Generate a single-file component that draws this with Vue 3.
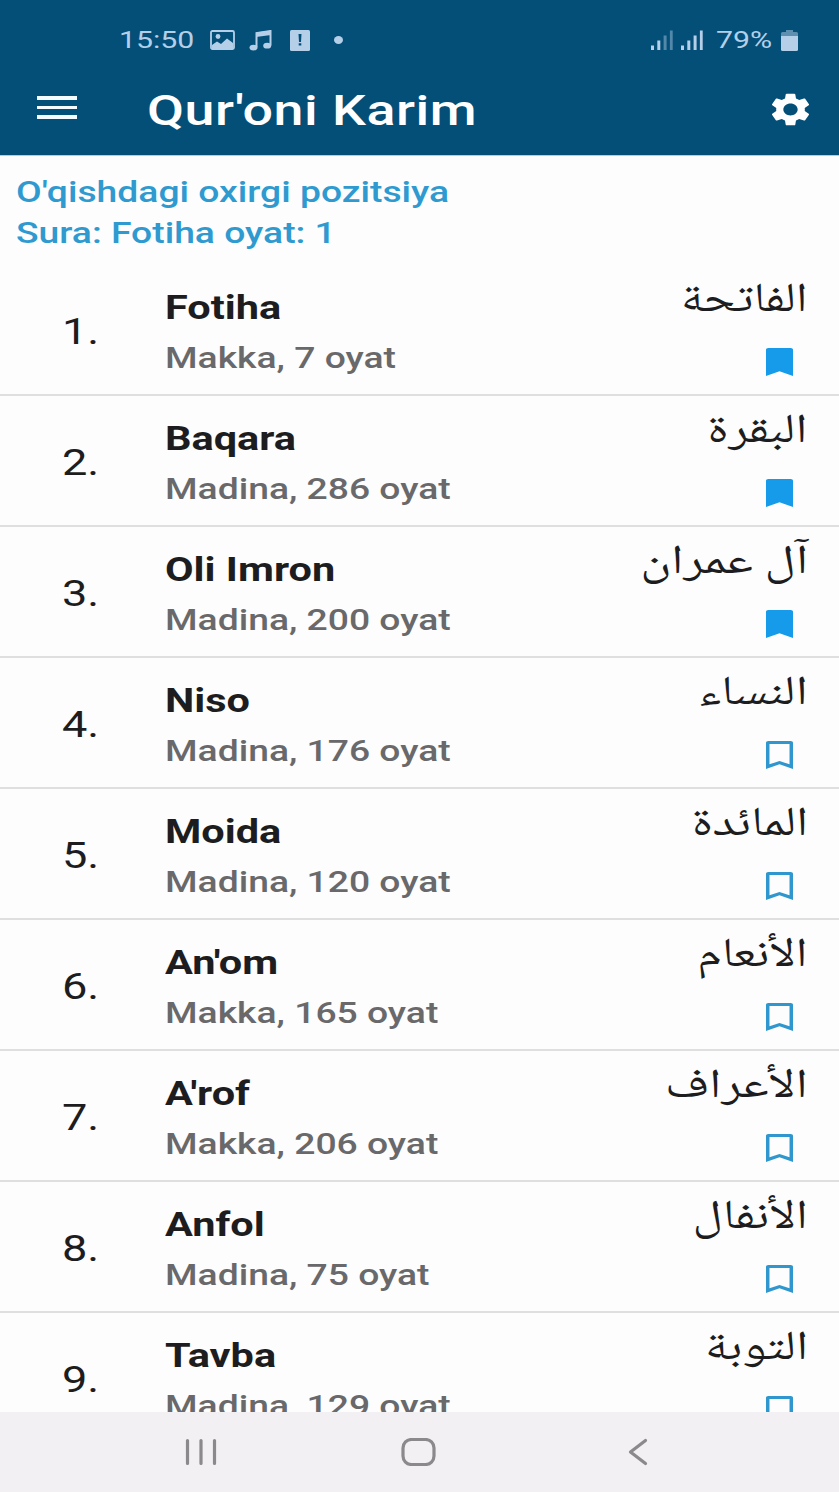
<script setup>
const suras = [
  { name: 'Fotiha', info: 'Makka, 7 oyat', arabic: 'الفاتحة', stretch: 1.21, saved: true },
  { name: 'Baqara', info: 'Madina, 286 oyat', arabic: 'البقرة', stretch: 1.26, saved: true },
  { name: 'Oli Imron', info: 'Madina, 200 oyat', arabic: 'آل عمران', stretch: 1.28, saved: true },
  { name: 'Niso', info: 'Madina, 176 oyat', arabic: 'النساء', stretch: 1.28, saved: false },
  { name: 'Moida', info: 'Madina, 120 oyat', arabic: 'المائدة', stretch: 1.25, saved: false },
  { name: "An'om", info: 'Makka, 165 oyat', arabic: 'الأنعام', stretch: 1.235, saved: false },
  { name: "A'rof", info: 'Makka, 206 oyat', arabic: 'الأعراف', stretch: 1.265, saved: false },
  { name: 'Anfol', info: 'Madina, 75 oyat', arabic: 'الأنفال', stretch: 1.243, saved: false },
  { name: 'Tavba', info: 'Madina, 129 oyat', arabic: 'التوبة', stretch: 1.254, saved: false }
]
</script>

<template>
  <div class="screen">
    <header class="top">
      <div class="status">
        <span class="wide clock">15:50</span>
        <svg class="s-img" viewBox="0 0 25 20" width="25" height="20">
          <rect x="1" y="1" width="23" height="18" rx="1.5" fill="none" stroke="currentColor" stroke-width="1.8" />
          <circle cx="8" cy="6.5" r="2.4" fill="currentColor" />
          <path d="M2 15 L7 11.5 L11 14 L17 8.5 L23 13 V19 H2Z" fill="currentColor" />
        </svg>
        <svg class="s-note" viewBox="0 0 23 21" width="23" height="21">
          <path d="M7.500 17 V3 L21.500 1 V15.500" fill="none" stroke="currentColor" stroke-width="2" />
          <path d="M7 2.500 L22 .5 V5 L7 7Z" fill="currentColor" />
          <ellipse cx="4.500" cy="17.600" rx="4" ry="2.900" fill="currentColor" />
          <ellipse cx="18.200" cy="15.700" rx="4" ry="2.900" fill="currentColor" />
        </svg>
        <svg class="s-alert" viewBox="0 0 20 21" width="20" height="21">
          <rect width="20" height="21" rx="1.5" fill="currentColor" />
          <path d="M8.500 4 H11.500 L11 12 H9Z M8.700 13.200 H11.300 V15.600 H8.700Z" fill="#044f78" />
        </svg>
        <i class="dot"></i>
        <span class="grow"></span>
        <svg class="s-sig" viewBox="0 0 22 20" width="22" height="20" fill="currentColor">
          <path d="M0 15.500h3V20H0zM6.300 10.500h3V20h-3z" />
          <path opacity=".45" d="M12.600 5.500h3V20h-3zM18.900 .5h2.800V20h-2.800z" />
        </svg>
        <svg class="s-sig2" viewBox="0 0 22 20" width="22" height="20" fill="currentColor">
          <path d="M0 15.500h3V20H0zM6.300 10.500h3V20h-3zM12.600 5.500h3V20h-3zM18.900 .5h2.800V20h-2.800z" />
        </svg>
        <span class="wide percent">79%</span>
        <svg class="s-bat" viewBox="0 0 17 21" width="17" height="21" fill="currentColor">
          <path opacity=".5" d="M5 0h7v2h3.500Q17 2 17 3.500V6H0V3.500Q0 2 1.500 2H5z" />
          <path d="M0 6h17v13.500Q17 21 15.500 21h-14Q0 21 0 19.500z" />
        </svg>
      </div>
      <div class="bar">
        <div class="menu"><i></i><i></i><i></i></div>
        <h1 class="wide title">Qur'oni Karim</h1>
        <svg class="gear" viewBox="2.2 2 19.6 20" preserveAspectRatio="none" width="39" height="33">
          <path fill="#fff" d="M19.140 12.940c.04-.3.060-.610.060-.940 0-.320-.020-.640-.070-.940l2.030-1.580c.18-.14.230-.410.120-.610l-1.920-3.320c-.12-.22-.37-.29-.59-.22l-2.390.960c-.5-.380-1.030-.7-1.620-.940l-.360-2.540c-.04-.24-.24-.41-.48-.41h-3.840c-.24 0-.43.170-.47.410l-.360 2.540c-.59.240-1.130.570-1.620.940l-2.390-.960c-.22-.08-.47 0-.59.220L2.740 8.870c-.12.210-.08.470.120.610l2.030 1.580c-.05.300-.09.630-.09.940s.020.640.070.940l-2.030 1.580c-.18.140-.23.410-.12.610l1.920 3.320c.12.220.37.290.59.220l2.390-.960c.5.380 1.030.7 1.620.940l.360 2.540c.05.240.24.410.48.410h3.840c.24 0 .44-.17.470-.41l.360-2.540c.59-.24 1.130-.560 1.620-.940l2.390.960c.22.080.47 0 .59-.22l1.920-3.320c.12-.22.070-.47-.12-.61l-2.010-1.580zM12 15.600c-1.980 0-3.600-1.620-3.600-3.600s1.620-3.600 3.600-3.600 3.600 1.620 3.600 3.600-1.620 3.600-3.600 3.600z" />
        </svg>
      </div>
    </header>

    <section class="last">
      <div><span class="wide">O'qishdagi oxirgi pozitsiya</span></div>
      <div><span class="wide">Sura: Fotiha oyat: 1</span></div>
    </section>

    <main class="list">
      <article v-for="(sura, i) in suras" :key="sura.name" class="row">
        <div class="num"><span class="wide">{{ i + 1 }}.</span></div>
        <div class="body">
          <div class="name"><span class="wide">{{ sura.name }}</span></div>
          <div class="info"><span class="wide">{{ sura.info }}</span></div>
        </div>
        <div class="side">
          <span class="arabic" lang="ar" dir="rtl" :style="{ transform: `scaleX(${sura.stretch})` }">{{ sura.arabic }}</span>
          <svg class="mark" viewBox="5 3 14 18" preserveAspectRatio="none" width="27" height="28">
            <path v-if="sura.saved" fill="#159bea" d="M17.800 3H6.200c-.7 0-1.200.5-1.200 1.200V21l7-3 7 3V4.200c0-.7-.5-1.200-1.200-1.200z" />
            <path v-else fill="#2f97cd" d="M17.800 3H6.200c-.7 0-1.200.5-1.200 1.200V21l7-3 7 3V4.200c0-.7-.5-1.200-1.200-1.200zM17.200 18l-5.200-2.180L6.800 18V5h10.400v13z" />
          </svg>
        </div>
      </article>
    </main>

    <nav class="nav">
      <svg viewBox="0 0 32 28" width="32" height="28"><path d="M2.500 2.500v23M16 2.500v23M29.500 2.500v23" stroke="#8b898c" stroke-width="3.2" stroke-linecap="round" /></svg>
      <svg viewBox="0 0 36 28" width="36" height="28"><rect x="2" y="1.500" width="31" height="25" rx="8.500" fill="none" stroke="#8b898c" stroke-width="3.2" /></svg>
      <svg viewBox="0 0 20 28" width="20" height="28"><path d="M17.500 2.500 L2.500 14 L17.500 25.500" fill="none" stroke="#8b898c" stroke-width="3.2" stroke-linecap="round" stroke-linejoin="round" /></svg>
    </nav>
  </div>
</template>

<style>
body { margin: 0; }
</style>

<style scoped>
.screen {
  width: 839px;
  height: 1492px;
  display: flex;
  flex-direction: column;
  overflow: hidden;
  background: #fdfdfd;
  font-family: Roboto, "Liberation Sans", sans-serif;
}
.wide { display: inline-block; white-space: nowrap; transform: scaleX(1.22); transform-origin: 0 50%; }
.top { height: 155px; flex: none; background: #044f78; border-bottom: 1px solid #a9cfea; }
.status { height: 80px; box-sizing: border-box; padding: 0 41px 0 119px; display: flex; align-items: center; color: #b5cfe8; font-size: 24px; }
.status .wide { transform: scaleX(1.26); }
.clock { width: 91px; }
.s-note { margin-left: 14px; }
.s-alert { margin-left: 18px; }
.dot { width: 9px; height: 8px; border-radius: 50%; background: currentColor; margin-left: 24px; }
.grow { flex: 1; }
.s-sig2 { margin-left: 8px; }
.percent { width: 65px; margin-left: 13px; }
.bar { height: 60px; display: flex; align-items: center; padding: 0 29px 0 37px; }
.menu { width: 40px; display: flex; flex-direction: column; gap: 6px; margin-top: -5px; }
.menu i { height: 3.4px; background: #f4fcff; }
.title { margin: 1px 0 0 70px; flex: 1; color: #fff; font-size: 42.5px; line-height: 50px; font-weight: 500; letter-spacing: .4px; }
.title.wide { transform: scaleX(1.265); }
.gear { margin-top: -2px; }
.last { height: 109px; flex: none; box-sizing: border-box; padding: 15px 16px 0; color: #2f9ad0; font-size: 30px; font-weight: 500; line-height: 41px; }
.last .wide, .info .wide { transform: scaleX(1.242); }
.list { flex: 1; min-height: 0; overflow: hidden; }
.row { height: 131px; box-sizing: border-box; border-bottom: 2px solid #dedfe0; display: flex; color: #1d1d1f; }
.num { width: 164.500px; box-sizing: border-box; padding: 45px 0 0 62px; font-size: 37px; line-height: 44px; }
.body { flex: 1; padding-top: 22px; }
.name { font-size: 34px; line-height: 40px; font-weight: 700; }
.info { margin-top: 12px; font-size: 30px; line-height: 38px; font-weight: 500; color: #69696b; }
.side { padding-right: 31px; display: flex; flex-direction: column; align-items: flex-end; }
.arabic { height: 83px; line-height: 75px; font-family: "Noto Naskh Arabic", "Noto Sans Arabic", "DejaVu Sans", sans-serif; font-size: 41px; white-space: nowrap; transform-origin: 100% 50%; }
.mark { margin-right: 15px; flex: none; }
.nav { height: 80px; flex: none; background: #f2f0f3; display: flex; align-items: center; padding-left: 185px; }
.nav svg + svg { margin-left: 184px; }
.nav svg + svg + svg { margin-left: 191px; }
</style>
